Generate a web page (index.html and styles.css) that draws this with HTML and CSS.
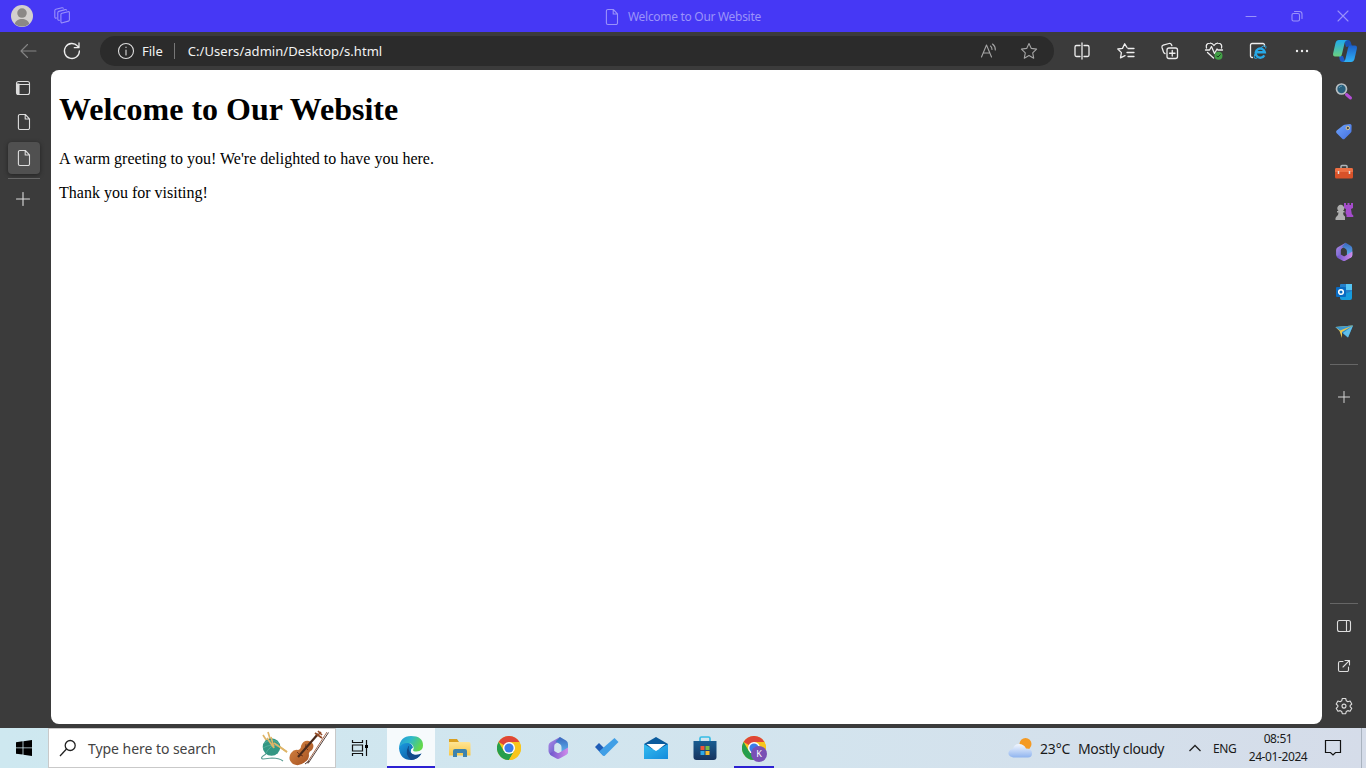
FILE: index.html
```html
<!DOCTYPE html>
<html lang="en">
<head>
<meta charset="utf-8">
<title>Welcome to Our Website</title>
<link rel="stylesheet" href="styles.css">
</head>
<body>
<svg class="defs" width="0" height="0">
  <defs>
    <linearGradient id="edgeBlue" x1="0" y1="0" x2="1" y2="1"><stop offset="0" stop-color="#1b9de2"/><stop offset="1" stop-color="#0c4a92"/></linearGradient>
    <linearGradient id="edgeTop" x1="0" y1="0" x2="1" y2=".4"><stop offset="0" stop-color="#2497dd"/><stop offset=".5" stop-color="#2fb9c8"/><stop offset="1" stop-color="#62d84d"/></linearGradient>
    <linearGradient id="copA" x1="0" y1="0" x2="0" y2="1"><stop offset="0" stop-color="#1fa9ee"/><stop offset="1" stop-color="#6bd07e"/></linearGradient>
    <linearGradient id="copB" x1="0" y1="0" x2="0" y2="1"><stop offset="0" stop-color="#1b5fc9"/><stop offset="1" stop-color="#2fb2f6"/></linearGradient>
    <linearGradient id="tag" x1="0" y1="0" x2="1" y2="1"><stop offset="0" stop-color="#6ea3fa"/><stop offset="1" stop-color="#4570e0"/></linearGradient>
    <linearGradient id="mA" x1="0" y1="0" x2="1" y2="1"><stop offset="0" stop-color="#b58ae8"/><stop offset="1" stop-color="#5557c4"/></linearGradient>
    <linearGradient id="mB" x1="0" y1="0" x2="0" y2="1"><stop offset="0" stop-color="#3a67bd"/><stop offset="1" stop-color="#62bdf5"/></linearGradient>
    <linearGradient id="mC" x1="0" y1="0" x2="1" y2="0"><stop offset="0" stop-color="#6c55cc"/><stop offset="1" stop-color="#d28bea"/></linearGradient>
    <linearGradient id="folder" x1="0" y1="0" x2="0" y2="1"><stop offset="0" stop-color="#ffe494"/><stop offset="1" stop-color="#f8c848"/></linearGradient>
    <linearGradient id="mail" x1="0" y1="0" x2="1" y2="1"><stop offset="0" stop-color="#35bdf0"/><stop offset="1" stop-color="#148bdc"/></linearGradient>
    <linearGradient id="store" x1="0" y1="0" x2="0" y2="1"><stop offset="0" stop-color="#195d92"/><stop offset="1" stop-color="#17345f"/></linearGradient>
    <linearGradient id="cloud" x1="0" y1="0" x2="0" y2="1"><stop offset="0" stop-color="#f3f7fe"/><stop offset="1" stop-color="#8fb4ef"/></linearGradient>
    <linearGradient id="wood" x1="0" y1="0" x2="1" y2="1"><stop offset="0" stop-color="#d98945"/><stop offset="1" stop-color="#a04c1e"/></linearGradient>
    <symbol id="page" viewBox="0 0 14 18"><path d="M2.900 1.500h5.400l4.200 4.300v9.200a1.500 1.500 0 0 1-1.500 1.500H2.900a1.500 1.500 0 0 1-1.500-1.500V3a1.500 1.500 0 0 1 1.500-1.500M8.200 1.700V6h4.200"/></symbol>
    <symbol id="plus" viewBox="0 0 14 14"><path d="M7 .5v13M.5 7h13"/></symbol>
    <symbol id="m365" viewBox="0 0 24 24">
      <path fill="url(#mA)" d="M14 1 4.500 6.200A4 4 0 0 0 2.500 9.700v5.500q0 2.600 2.500 3.600l3.200-1.900V10q0-1.500 1.500-2.400L14 5.200z"/>
      <path fill="url(#mB)" d="M14 1l6 3.400q2 1.300 2 3.800v7.300q0 2.200-2 3.300l-4.500-2.600V11q0-2-1.700-3l-4.300-2.500q2.500-2 4.500-4.500z"/>
      <path fill="url(#mC)" d="M3.500 17.500 8.200 15l3 1.700q1 .5 2 0L22 11.500v4q0 2.300-2 3.400l-6 3.400q-2 1.200-4 0L5 19.500q-1.200-.8-1.500-2z"/>
    </symbol>
    <symbol id="chrome" viewBox="0 0 24 24">
      <circle cx="12" cy="12" r="12" fill="#f8c51c"/>
      <path fill="#df4637" d="M12 12 1.600 6A12 12 0 0 1 22.400 6z"/>
      <path fill="#269e4c" d="M1.600 6A12 12 0 0 0 12 24l5.200-9L12 12 6.800 15z"/>
      <path fill="#f8c51c" d="M12 24A12 12 0 0 0 22.400 6H12l5.200 9z"/>
      <circle cx="12" cy="12" r="6" fill="#fff"/><circle cx="12" cy="12" r="4.600" fill="#3c7ce8"/>
    </symbol>
  </defs>
</svg>

<header class="titlebar">
  <svg class="avatar" viewBox="0 0 24 24"><circle cx="12" cy="12" r="12" fill="#d3d0ce"/><circle cx="12" cy="8.800" r="5.200" fill="#8b8886"/><path fill="#8b8886" d="M4.200 20.700c1-7.200 14.600-7.200 15.600 0A12 12 0 0 1 4.200 20.700z"/></svg>
  <svg class="line workspaces" width="18" height="18" viewBox="0 0 18 18"><path d="m9 6.300 6-1.600q1.400-.3 1.400 1v7.100q0 1-1 1.300l-6 1.700q-1.400.4-1.500-1V7.500q0-1 1.100-1.200M6.500 13.200q-1.700.4-1.700-1V5.700q0-1 1-1.300l6.500-1.800q1-.2 1.300.5M3.500 11q-1.700.4-1.700-1V3.600q0-1 1-1.300L9 .8q1-.2 1.300.5"/></svg>
  <div class="window-title"><svg class="line" width="14" height="18"><use href="#page"/></svg><span>Welcome to Our Website</span></div>
  <div class="window-buttons">
    <svg class="line" width="12" height="12"><path d="M1 6.500h10"/></svg>
    <svg class="line" width="12" height="12"><rect x="1" y="3.500" width="7.500" height="7.500" rx="1.500"/><path d="M3.500 1.500h5a2.500 2.500 0 0 1 2.500 2.500v4.500"/></svg>
    <svg class="line" width="12" height="12"><path d="M1 1l10 10M11 1 1 11"/></svg>
  </div>
</header>

<nav class="toolbar">
  <div class="tool"><svg class="line dim" width="18" height="16"><path d="M17 8H2M8.500 1.500 2 8l6.500 6.500"/></svg></div>
  <div class="tool reload"><svg class="line bold" width="18" height="18"><path d="M16.400 9A7.500 7.500 0 1 1 14.500 4L16 5.600M16 1v4.700h-4.700"/></svg></div>
  <div class="address">
    <svg class="line" width="18" height="18"><circle cx="9" cy="9" r="7.500"/><path d="M9 8v5M9 5v.5"/></svg>
    <span class="scheme">File</span><span class="divider"></span><span class="url">C:/Users/admin/Desktop/s.html</span>
    <svg class="line muted read" width="18" height="18"><path d="M1.500 15 6.500 3l5 12M3.300 11h6.500M10.500 4q1.500 1.200 1.500 3.500M12.500 2q3 2.300 2.800 6"/></svg>
    <svg class="line muted" width="18" height="18" viewBox="0 0 18 18"><path d="m9 1.500 2.300 4.900 5.300.7-3.900 3.700 1 5.400L9 13.600l-4.700 2.600 1-5.400L1.400 7.100l5.300-.7z"/></svg>
  </div>
  <div class="tool"><svg class="line bold" width="18" height="18"><path d="M7 3.500H3.500a1.500 1.500 0 0 0-1.500 1.500v8a1.500 1.500 0 0 0 1.500 1.500H7M11 3.500h3.500A1.500 1.500 0 0 1 16 5v8a1.500 1.500 0 0 1-1.500 1.500H11M9 1v16"/></svg></div>
  <div class="tool"><svg class="line bold" width="18" height="18"><path d="M10 5.500 7.700 1.800 5.500 6.400.8 7l3.600 3.600-.9 5.300 4.500-2.300M11 6.500h6M10 10.500h7M11 14.500h6"/></svg></div>
  <div class="tool"><svg class="line bold" width="18" height="18"><rect x="6" y="6" width="10.500" height="10.500" rx="2"/><path d="M11.250 8.500v5.500M8.500 11.250H14M4 11.700q-1-.4-1.500-1.700L1 5.500Q.5 3.800 2.200 3.200L8 1.500q1.800-.5 2.500 1.200l.4 1"/></svg></div>
  <div class="tool"><svg width="20" height="20"><path class="line bold" d="M2.500 7Q1.300 2.400 6 2.200 8.300 2 10 4.500 11.700 2 14 2.200 18.700 2.500 17.500 7M1.500 9h4L7.500 5.500l3 7L13 8l1 1h4.500M3.500 11.500 9.500 17"/><circle cx="14.500" cy="14.700" r="4" fill="#43a047"/><path d="m12.500 14.700 1.400 1.400 2.700-2.800" fill="none" stroke="#173b1b"/></svg></div>
  <div class="tool"><svg width="18" height="18"><path class="line bold" d="M3.500 15.500H3A1.500 1.500 0 0 1 1.500 14V3A1.500 1.500 0 0 1 3 1.500h11A1.500 1.500 0 0 1 15.500 3v1"/><path d="M15.300 13.300a4.600 4.600 0 1 1 .5-3H7" fill="none" stroke="#27a9e7" stroke-width="2.400"/><path d="M6 12q-2.500 6.500 3 3.500M12 5.500q6-4 4.700 1" fill="none" stroke="#27a9e7"/></svg></div>
  <div class="tool"><svg width="18" height="18" fill="#eee"><circle cx="4" cy="9" r="1.200"/><circle cx="9" cy="9" r="1.200"/><circle cx="14" cy="9" r="1.200"/></svg></div>
  <div class="tool copilot"><svg width="24" height="24" viewBox="0 0 24 24"><path fill="#1952b5" d="M11 1h4q2 0 2.700 2L19 7l-6 1z"/><path fill="#1e5ac5" d="M6 17h4l2 5q-1 1-2.500 1-2 0-2.700-2z"/><path fill="url(#copB)" d="M16.500 6.500H22q2.300 0 1.900 3L21.500 20q-.8 3-3.500 3H9.500q2 0 2.800-2.500L15 9q.5-2 1.500-2.500z"/><path fill="url(#copA)" d="M6 1h8.500q-2 0-2.800 2.500L9 15q-.5 2-1.500 2.500H2q-2.300 0-1.900-3L2.500 4Q3.300 1 6 1z"/></svg></div>
</nav>

<div class="browser-body">
  <aside class="tabs">
    <svg class="line side-toggle" width="16" height="16"><rect x="1.500" y="1.500" width="13" height="13" rx="2"/><path d="M2 4.500h12.500"/><path d="M2 4h2v10H3L2 13z" fill="#ddd"/></svg>
    <svg class="line tab" width="14" height="18"><use href="#page"/></svg>
    <div class="active-tab"><svg class="line" width="14" height="18"><use href="#page"/></svg></div>
    <span class="rule"></span>
    <svg class="line add-tab" width="14" height="14"><use href="#plus"/></svg>
  </aside>
  <main class="document"><h1>Welcome to Our Website</h1><p>A warm greeting to you! We're delighted to have you here.</p><p>Thank you for visiting!</p></main>
  <aside class="apps">
    <div class="app"><svg width="18" height="18"><path d="m11.500 11.500 4 3.500" stroke="#b44ed6" stroke-width="3" stroke-linecap="round"/><circle cx="6.500" cy="6" r="5" fill="#285f7c" stroke="#b7bec2" stroke-width="1.700"/><path d="M4 5q1-2 3-2" fill="none" stroke="#5597b5"/></svg></div>
    <div class="app"><svg width="18" height="18"><path fill="url(#tag)" d="M9.500 1.800 15 1q1.500 0 1.600 1.500L16.500 8q0 1-.8 1.700l-6 6q-1.200 1-2.400 0L1.500 10q-1-1.200.2-2.400L8 2.500z"/><circle cx="12.800" cy="5" r="1.700" fill="#4b4a44" stroke="#dcca95"/></svg></div>
    <div class="app"><svg width="18" height="18"><path d="M6 5V3.500q0-1 1-1h4q1 0 1 1V5" fill="none" stroke="#aeb4b8" stroke-width="1.500"/><rect y="5" width="18" height="10.500" rx="1.500" fill="#d85229"/><path fill="#ed7044" d="M0 6.500Q0 5 1.500 5h15Q18 5 18 6.500V9H0z"/><path d="M3.500 8v3M14.500 8v3" stroke="#ddd" stroke-width="1.500"/></svg></div>
    <div class="app"><svg width="20" height="20"><path fill="#a54ccc" d="M10 1h2v2h1.500V1h2v2H17V1h2v5l-2 1 .8 5 1.500 1.500V15H12.500v-2l-1-2 .5-4-2-1z"/><path fill="#aeaeae" d="M2.500 14.500q2-1 2-4H3V9h1.500a3.500 3.500 0 1 1 4.500 0h1.500v1.500H9q0 3 2 4V18h-9.500v-2z"/></svg></div>
    <div class="app"><svg width="20" height="20"><use href="#m365"/></svg></div>
    <div class="app"><svg width="18" height="18"><rect x="5" y="1" width="12" height="11" rx="1" fill="#247fc9"/><path fill="#55c5f4" d="M11 1h6v6h-6z"/><path fill="#159bdd" d="m5 13 12-5v7q0 2-2 2H7q-2 0-2-2z"/><rect x="1" y="4" width="10" height="10" rx="1" fill="#096bc2"/><circle cx="6" cy="9" r="2.300" fill="none" stroke="#fff" stroke-width="1.500"/></svg></div>
    <div class="app"><svg width="18" height="18"><path fill="#2a8ac9" d="M.5 4 18 2.500 13 14.500l-4-3z"/><path fill="#60bfe9" d="M18 2.500 8 10l5 4.500z"/><path fill="#eac64d" d="M.5 4 18 2.500 7 9v6L4.500 8z"/><path fill="#3b98d2" d="M.5 4 18 2.500 5 7.500z"/></svg></div>
    <span class="rule"></span>
    <svg class="line add-app" width="12" height="12"><use href="#plus"/></svg>
    <span class="rule bottom-rule"></span>
    <div class="app panel"><svg class="line" width="16" height="16"><rect x="1.500" y="2.500" width="13" height="11" rx="2"/><path d="M10.500 3v10"/></svg></div>
    <div class="app"><svg class="line" width="16" height="16"><path d="M7 3.500H4A1.500 1.500 0 0 0 2.500 5v7A1.500 1.500 0 0 0 4 13.500h7a1.500 1.500 0 0 0 1.500-1.500V9M9 2.500h4.500V7M13.300 2.700 7 9"/></svg></div>
    <div class="app"><svg class="line" width="18" height="18" viewBox="0 0 18 18"><path d="m7.300 1.500-.6 2.300-1.500.9-2.300-.7-1.700 3 1.700 1.700v.9L1.200 11.300l1.700 3 2.300-.7 1.500.9.600 2.200h3.400l.6-2.200 1.500-.9 2.300.7 1.700-3-1.700-1.700v-.9l1.700-1.700-1.700-3-2.300.7-1.500-.9-.6-2.300z"/><circle cx="9" cy="9.100" r="2"/></svg></div>
  </aside>
</div>

<footer class="taskbar">
  <div class="start"><svg width="16" height="16" viewBox="0 0 16 16"><path d="m0 2.200 6.600-.9v6.200H0zm7.400-1L16 0v7.500H7.400zM0 8.300h6.600v6.300L0 13.700zm7.400 0H16V16l-8.600-1.200z"/></svg></div>
  <div class="search">
    <svg class="glass" width="18" height="18"><circle cx="11.200" cy="6.500" r="5"/><path d="m7.500 10-6.500 7"/></svg><span>Type here to search</span>
    <svg class="art" width="72" height="36" viewBox="0 0 72 36">
      <path d="m4 5 11 17M9 2l6 20M10 9l18 13" stroke="#dfb568" stroke-width="1.700"/><circle cx="12.500" cy="17" r="8.800" fill="#339783"/><path d="M5 13q8-5 15 0M4 18q8-5 17-1M7 23q4-8 13-9" fill="none" stroke="#63b5a3" stroke-width=".7"/><path d="m8 8 7 10M12 7l3 11M15 13l13 9" stroke="#dfb568" stroke-width="1.600"/><path d="M7 24q-7 4-3 5l9-1q7 0 11 3" fill="none" stroke="#5c9f95" stroke-width="1.200"/>
      <path fill="url(#wood)" d="M32 23q3-4 7-3 3-1 3-4 2-6 8-5 7 3 3 9-4 2-3 5 0 5-4 7-6 5-12 2-6-5-2-11z"/><path d="m39 27 20-23" stroke="#4a2b1c" stroke-width="2.200"/><path d="m58 6 4-4M56 3l7 5M59 1l4 4" stroke="#944b26" stroke-width="1.700"/><path d="m48 33 20-31" stroke="#a66b50"/><path d="m49 33.500 20.500-31M46 34l4-3" stroke="#513e39"/><path d="M38 22q3 4 6 4M47 14q-2 4 2 6" fill="none" stroke="#5c2a15" stroke-width=".8"/>
    </svg>
  </div>
  <div class="taskview"><svg width="18" height="18"><path d="M1.500 1v2.500h10V1M1.500 17v-2.500h10V17M1.500 6h10v6h-10zM15.500 1v16" fill="none" stroke="#111" stroke-width="1.200"/><path d="M14 6h3v3h-3z"/></svg></div>
  <div class="task edge"><svg width="24" height="24" viewBox="0 0 24 24"><path fill="url(#edgeBlue)" d="M0 12Q1 6.500 7 6.500q6 0 7 5l-2 2q-1 4.500 4 5.500 3 .5 6.500-1.500Q19 24 12 24 1 24 0 12z"/><path fill="url(#edgeTop)" d="M0 12Q1 0 12 0q12 0 12 9.500 0 5.500-6.500 6-3.500 0-3.500-1.500 1-1 .5-3-1-4-6-4-6 0-8.500 5z"/><path fill="#124a89" d="M9.500 10Q5 18 12 24q6 0 10.500-6.500-8 3.500-12-2-1.500-2.500-.5-5.500z"/></svg></div>
  <div class="task"><svg width="22" height="20"><path fill="#d99f20" d="M0 1h8l2 3v4H0z"/><path fill="url(#folder)" d="M0 4h20q1.500 0 1.500 2v11.500H0z"/><path fill="#3d83ad" d="M4 19v-6q0-2 2-2h10q2 0 2 2v6h-4v-4H8v4z"/></svg></div>
  <div class="task"><svg width="24" height="24"><use href="#chrome"/></svg></div>
  <div class="task"><svg width="24" height="24"><use href="#m365"/></svg></div>
  <div class="task"><svg width="26" height="24"><path fill="#1f5db7" d="m1 11 4-4 8 8-4 4.500z"/><path fill="#409fe6" d="m9 19.500-4-4L20.500 2 24.500 6 11 19.500q-1 1-2 0z"/></svg></div>
  <div class="task"><svg width="24" height="24"><path fill="#0b5b9d" d="M0 8 12 1l12 7v5H0z"/><path fill="#fff" d="M2.500 8h19L12 15.500z"/><path fill="url(#mail)" d="m0 8 12 7 12-7v15H0z"/></svg></div>
  <div class="task"><svg width="24" height="24"><path d="M7 6V2.500Q7 1 8.500 1h7Q17 1 17 2.500V6" fill="none" stroke="#36bce5" stroke-width="1.700"/><path fill="url(#store)" d="M.5 5h23v16q0 3-3 3h-17q-3 0-3-3z"/><path fill="#ef5538" d="M7.500 10h4v4h-4z"/><path fill="#7abb44" d="M12.500 10h4v4h-4z"/><path fill="#2fa9e8" d="M7.500 15h4v4h-4z"/><path fill="#f4bd32" d="M12.500 15h4v4h-4z"/></svg></div>
  <div class="task profile"><svg width="24" height="24"><use href="#chrome"/></svg><span class="badge">K</span></div>
  <div class="weather"><svg width="25" height="22"><circle cx="17.500" cy="7" r="6" fill="#f49a24"/><path fill="url(#cloud)" d="M4 20q-4-1-3.500-4.500Q1.500 12 5 12q1-5 6-5 5 0 7 4.500 6 0 6 5 0 4-4 4H5z"/></svg><span class="temp">23°C</span><span class="condition">Mostly cloudy</span></div>
  <svg class="chevron" width="14" height="8"><path d="m1.500 7 5.500-5.500L12.500 7" fill="none" stroke="#222" stroke-width="1.300"/></svg>
  <span class="language">ENG</span>
  <div class="clock"><span class="time">08:51</span><span class="date">24-01-2024</span></div>
  <svg class="notice" width="18" height="18"><path d="M1.500 1.500h15v12h-5L9 16l-2.500-2.500h-5z" fill="none" stroke="#111" stroke-width="1.200"/></svg>
  <span class="show-desktop"></span>
</footer>
</body>
</html>
```
FILE: styles.css
```css
* { box-sizing: border-box; }
body { margin: 0; width: 1366px; height: 768px; overflow: hidden; display: flex; flex-direction: column; background: #3b3b3b; font-family: "Noto Sans", "Open Sans", sans-serif; }
svg { display: block; flex: none; overflow: visible; }
span { white-space: nowrap; }
.defs { width: 0; height: 0; }
.line { fill: none; stroke: #ddd; stroke-width: 1.1; stroke-linecap: round; stroke-linejoin: round; }
.bold { stroke: #eee; stroke-width: 1.3; }
.dim { stroke: #858585; }
.muted { stroke: #a5a5a5; }
.titlebar { height: 32px; flex: none; display: grid; grid-template-columns: 22px 18px 1fr 138px; column-gap: 20px; align-items: center; padding-left: 11px; background: #4638f5; }
.titlebar .line { stroke: #9a91fa; }
.avatar { width: 22px; height: 22px; }
.window-title { display: flex; align-items: center; gap: 9px; margin-left: 514px; padding-top: 1px; color: #9b93fa; font-size: 12px; line-height: 18px; letter-spacing: -.3px; }
.window-buttons { display: grid; grid-template-columns: repeat(3, 46px); justify-items: center; }
.toolbar { height: 38px; flex: none; display: flex; align-items: center; padding-left: 6px; }
.tool { width: 44px; flex: none; display: flex; justify-content: center; }
.copilot { width: 42px; }
.address { width: 954px; height: 30px; flex: none; margin: 0 6px; padding: 0 16px 0 17px; display: flex; align-items: center; background: #2b2b2b; border-radius: 15px; color: #f3f3f3; font-size: 13px; }
.scheme { margin-left: 7px; }
.url { letter-spacing: .05px; }
.divider { width: 1px; height: 16px; margin: 0 13px 0 11px; background: #777; }
.read { margin: 0 22px 0 auto; }
.browser-body { height: 658px; flex: none; display: grid; grid-template-columns: 51px 1271px 44px; }
.tabs { display: flex; flex-direction: column; align-items: center; padding: 10px 4px 0 0; }
.side-toggle, .add-tab { margin-right: 1px; }
.tab { margin-top: 17px; }
.active-tab { width: 32px; height: 32px; margin-top: 11px; border-radius: 4px; display: grid; place-items: center; background: #505050; box-shadow: 0 1px 4px #222; }
.rule { display: block; width: 32px; height: 1px; margin: 4px 0 13px; background: #666; flex: none; }
.document { height: 654px; padding: 0 8px; overflow: hidden; background: #fff; border-radius: 8px; color: #000; font: 16px "Liberation Serif", serif; }
h1 { margin: 21px 0 22px; font-size: 32px; line-height: 37px; }
p { margin: 16px 0; line-height: 18px; }
.apps { display: flex; flex-direction: column; align-items: center; padding-top: 2px; }
.app { height: 40px; flex: none; display: grid; place-items: center; }
.apps .rule { width: 28px; margin: 12px 0 26px; }
.apps .bottom-rule { margin: 200px 0 2px; }
.taskbar { height: 40px; flex: none; display: flex; align-items: center; background: linear-gradient(90deg, #cee8f0, #d3e4ee 60%, #d5dce9); color: #1a1a1a; }
.start { width: 48px; flex: none; display: grid; place-items: center; }
.search { width: 288px; height: 40px; flex: none; display: flex; align-items: center; background: #fff; border: 1px solid #c9c9c9; padding-left: 10px; font-size: 14px; color: #444; }
.glass { fill: none; stroke: #222; stroke-width: 1.3; }
.search span { width: 128px; margin-left: 11px; letter-spacing: -.05px; }
.art { margin-left: 43px; }
.taskview { width: 51px; flex: none; padding-right: 3px; display: grid; place-items: center; }
.task { width: 49px; height: 40px; flex: none; position: relative; display: grid; place-items: center; }
.edge { background: #f6fafc; box-shadow: inset 0 -2px #2b20d2; width: 48px; }
.profile { background: linear-gradient(#2b20d2, #2b20d2) center bottom / 40px 2px no-repeat; }
.badge { position: absolute; left: 22px; top: 18px; width: 16px; height: 16px; border-radius: 50%; background: #7950b5; color: #fff; font-size: 9px; line-height: 16px; text-align: center; }
.weather { width: 157px; flex: none; margin-left: 230px; display: flex; align-items: center; font-size: 14px; letter-spacing: -.15px; }
.temp { width: 30px; margin: 0 8px 0 7px; }
.condition { letter-spacing: -.35px; }
.chevron { margin-left: 23px; }
.language { width: 24px; margin-left: 11px; font-size: 12px; letter-spacing: -.4px; }
.clock { width: 62px; margin-left: 10px; display: flex; flex-direction: column; align-items: center; font-size: 12px; line-height: 18px; letter-spacing: -.4px; }
.notice { margin-left: 15px; }
.show-desktop { width: 1px; height: 40px; margin-left: auto; margin-right: 4px; background: #a9b3bf; }
```
